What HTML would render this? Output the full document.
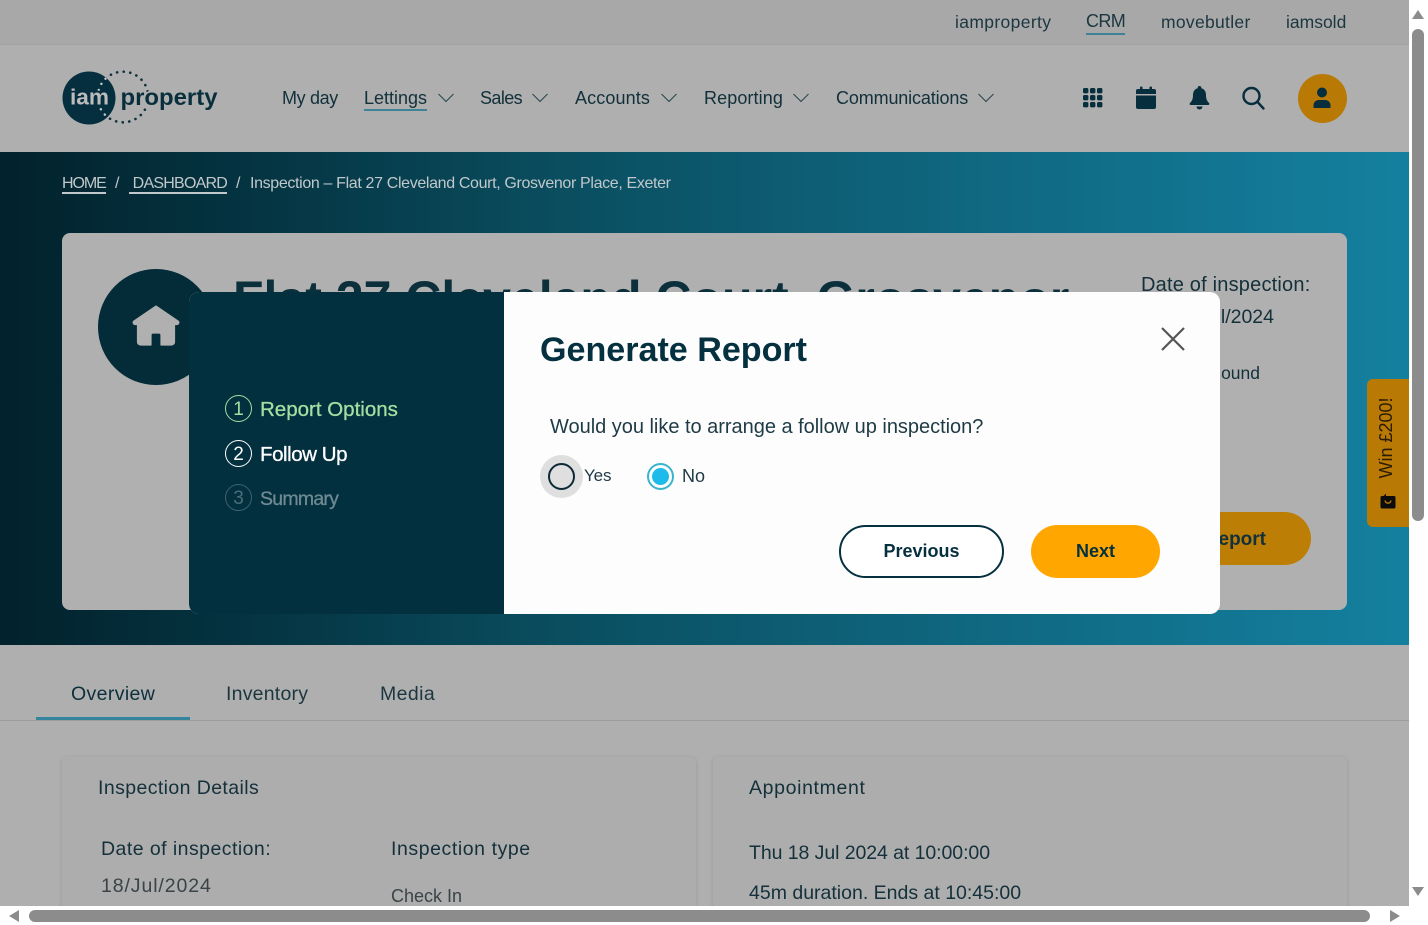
<!DOCTYPE html>
<html lang="en"><head><meta charset="utf-8"><title>Generate Report</title>
<style>
html,body{margin:0;padding:0;width:1428px;height:925px;overflow:hidden;background:#fff}
body{font-family:"Liberation Sans",sans-serif;color:#0b2a35;position:relative}
.t{position:absolute;white-space:nowrap;line-height:1.2}
.b{position:absolute}
#vp{position:absolute;left:0;top:0;width:1409px;height:906px;overflow:hidden;background:#afafaf}
.nav{font-size:18px;color:#12303a;top:88px}
.ul{position:absolute;height:2px;background:#3f8298}
svg{position:absolute;overflow:visible}
.card{position:absolute;background:#adadad;border-radius:6px;box-shadow:0 1px 5px rgba(0,0,0,.12)}
.step{position:absolute;left:225px;width:25px;height:25px;border:1.5px solid;border-radius:50%;text-align:center;line-height:27px;font-size:19px;box-sizing:content-box}
.m{-webkit-text-stroke:.3px currentColor}
.bc{font-size:16px;color:#c0c8cb;line-height:16px;top:176px}
</style></head><body>
<div id="vp">
 <div class="b" style="left:0;top:0;width:1409px;height:44px;background:#a8a8a8;border-bottom:1px solid #a2a2a2"></div>
 <div class="t" style="left:955px;top:12px;font-size:17.5px;letter-spacing:.36px;color:#1c3640">iamproperty</div>
 <div class="t" style="left:1086px;top:11px;font-size:18px;letter-spacing:-.6px;color:#1c3640">CRM</div>
 <div class="ul" style="left:1086px;top:33px;width:39px"></div>
 <div class="t" style="left:1161px;top:12px;font-size:17.5px;letter-spacing:.3px;color:#1c3640">movebutler</div>
 <div class="t" style="left:1286px;top:12px;font-size:17.5px;color:#1c3640">iamsold</div>

 <svg style="left:60px;top:68px" width="160" height="60" viewBox="0 0 160 60">
  <defs><clipPath id="cp"><circle cx="29" cy="30" r="26.5"/></clipPath></defs>
  <circle cx="63" cy="29" r="25.3" fill="none" stroke="#10303b" stroke-width="2.600" stroke-linecap="round" stroke-dasharray="0.1 6.55"/>
  <circle cx="29" cy="30" r="26.5" fill="#052f3e"/>
  <circle cx="63" cy="29" r="25.3" fill="none" stroke="#c4c9cb" stroke-width="2.400" stroke-linecap="round" stroke-dasharray="0.1 6.55" clip-path="url(#cp)"/>
  <text x="10" y="36.500" font-family="Liberation Sans" font-size="22" font-weight="700" fill="#bcbcbc" stroke="#052f3e" stroke-width="4" paint-order="stroke" textLength="39" lengthAdjust="spacingAndGlyphs">iam</text>
  <text x="60.500" y="37" font-family="Liberation Sans" font-size="23.500" font-weight="700" fill="#0a2f3c" stroke="#afafaf" stroke-width="3.500" paint-order="stroke" textLength="97" lengthAdjust="spacingAndGlyphs">property</text>
 </svg>
 <div class="t nav" style="left:282px;letter-spacing:-.35px">My day</div>
 <div class="t nav" style="left:364px">Lettings</div>
 <div class="ul" style="left:364px;top:109px;width:63px"></div>
 <div class="t nav" style="left:480px;letter-spacing:-.6px">Sales</div>
 <div class="t nav" style="left:575px;letter-spacing:.12px">Accounts</div>
 <div class="t nav" style="left:704px;letter-spacing:.1px">Reporting</div>
 <div class="t nav" style="left:836px;letter-spacing:-.14px">Communications</div>
 <svg style="left:0;top:0" width="1409" height="150" fill="none" stroke="#2a4651" stroke-width="1.100">
  <path d="M438.500 94l7.500 7.500 7.500-7.500M532.500 94l7.500 7.500 7.500-7.500M661.500 94l7.500 7.500 7.500-7.500M793.500 94l7.500 7.500 7.500-7.500M978.500 94l7.500 7.500 7.500-7.500"/>
 </svg>
 <svg style="left:1083px;top:88px" width="20" height="20" fill="#072e3c">
  <rect x="0" y="0" width="5.400" height="5.400" rx="1.600"/><rect x="7" y="0" width="5.400" height="5.400" rx="1.600"/><rect x="14" y="0" width="5.400" height="5.400" rx="1.600"/>
  <rect x="0" y="7" width="5.400" height="5.400" rx="1.600"/><rect x="7" y="7" width="5.400" height="5.400" rx="1.600"/><rect x="14" y="7" width="5.400" height="5.400" rx="1.600"/>
  <rect x="0" y="14" width="5.400" height="5.400" rx="1.600"/><rect x="7" y="14" width="5.400" height="5.400" rx="1.600"/><rect x="14" y="14" width="5.400" height="5.400" rx="1.600"/>
 </svg>
 <svg style="left:1136px;top:86px" width="20" height="24" fill="#072e3c">
  <path d="M2 3h16a2 2 0 0 1 2 2v3H0V5a2 2 0 0 1 2-2zM0 9.500h20V21a2 2 0 0 1-2 2H2a2 2 0 0 1-2-2z"/><rect x="4" y="0.500" width="2.500" height="5" rx="1"/><rect x="13.500" y="0.500" width="2.500" height="5" rx="1"/>
 </svg>
 <svg style="left:1189px;top:86px" width="21" height="24" fill="#072e3c">
  <path d="M10.500 0a1.800 1.800 0 0 1 1.800 2.200C15.500 3 17 5.700 17 9c0 4 1 6 3 8 .8.800.3 2-.8 2H1.800c-1.100 0-1.600-1.200-.8-2 2-2 3-4 3-8 0-3.300 1.500-6 4.700-6.800A1.800 1.800 0 0 1 10.500 0z"/><path d="M7.500 20.500h6a3 3 0 0 1-6 0z"/>
 </svg>
 <svg style="left:1242px;top:86px" width="23" height="24" fill="none" stroke="#072e3c" stroke-width="2.400">
  <circle cx="9.500" cy="10" r="8"/><path d="M15.500 16l6 6.500" stroke-linecap="round"/>
 </svg>
 <div class="b" style="left:1298px;top:74px;width:49px;height:49px;border-radius:50%;background:#b87a05"></div>
 <svg style="left:1312px;top:87px" width="20" height="22" fill="#072e3c">
  <circle cx="10" cy="5.500" r="5"/><path d="M1.500 21v-2.500C1.500 15 4 13 7 13h6c3 0 5.500 2 5.500 5.500V21z"/>
 </svg>

 <div class="b" style="left:0;top:152px;width:1409px;height:493px;background:linear-gradient(90deg,#02222c 0%,#053644 20%,#0a4e60 40%,#0e6077 60%,#11708b 80%,#14809f 100%)"></div>
 <div class="t bc" style="left:62px;letter-spacing:-1.05px;border-bottom:2px solid #c0c8cb">HOME</div>
 <div class="t bc" style="left:115px">/</div>
 <div class="t bc" style="left:129px;letter-spacing:-.77px;border-bottom:2px solid #c0c8cb">&nbsp;DASHBOARD</div>
 <div class="t bc" style="left:236px">/</div>
 <div class="t bc" style="left:250px;letter-spacing:-.35px">Inspection – Flat 27 Cleveland Court, Grosvenor Place, Exeter</div>

 <div class="b" style="left:62px;top:233px;width:1285px;height:377px;background:#b0b0b0;border-radius:8px"></div>
 <div class="b" style="left:98px;top:269px;width:116px;height:116px;border-radius:50%;background:#032b38"></div>
 <svg style="left:133px;top:304px" width="47" height="42" fill="#b0b0b0" stroke="#b0b0b0" stroke-width="1.200" stroke-linejoin="round">
  <path d="M23 2L45 17c1.500 1 .8 3.500-1 3.500H41.500V38a3 3 0 0 1-3 3H28V31a2 2 0 0 0-2-2H20a2 2 0 0 0-2 2V41H7.500a3 3 0 0 1-3-3V20.500H2c-1.800 0-2.500-2.500-1-3.500z"/>
 </svg>
 <div class="t" style="left:233px;top:272px;font-size:50px;font-weight:700;color:#0c2f3c;line-height:54px">Flat 27 Cleveland Court, Grosvenor</div>
 <div class="t" style="left:1141px;top:273px;font-size:20px;letter-spacing:.2px;color:#14303a">Date of inspection:</div>
 <div class="t" style="left:1150px;width:124px;text-align:right;top:306px;font-size:19.500px;color:#14303a">18/Jul/2024</div>
 <div class="t" style="left:1160px;width:100px;text-align:right;top:363px;font-size:17.500px;color:#14303a">ound</div>
 <div class="b" style="left:1140px;top:512px;width:171px;height:53px;border-radius:27px;background:#bd7e06"></div>
 <div class="t" style="left:1166px;width:100px;text-align:right;top:529px;font-size:19px;font-weight:700;color:#14303a">eport</div>

 <div class="b" style="left:1367px;top:379px;width:42px;height:148px;background:#b87a05;border-radius:6px 0 0 6px"></div>
 <div class="t" style="left:1387px;top:438px;font-size:18px;color:#2b1c03;transform:translate(-50%,-50%) rotate(-90deg)">Win £200!</div>
 <svg style="left:1379px;top:491px" width="18" height="18"><path d="M3 5h1.500L7 2.500V5h8a1.500 1.500 0 0 1 1.500 1.500V16a1.500 1.500 0 0 1-1.500 1.500H3A1.500 1.500 0 0 1 1.500 16V6.500A1.500 1.500 0 0 1 3 5z" fill="#0c0c0c"/><path d="M6 9.500c.8 3.500 5.200 3.500 6 0" stroke="#b87a05" fill="none" stroke-width="1.400"/></svg>

 <div class="b" style="left:0;top:645px;width:1409px;height:262px;background:#afafaf"></div>
 <div class="t" style="left:71px;top:683px;font-size:19.500px;letter-spacing:.37px;color:#0c2f3c">Overview</div>
 <div class="t" style="left:226px;top:683px;font-size:19.500px;letter-spacing:.22px;color:#1c3640">Inventory</div>
 <div class="t" style="left:380px;top:683px;font-size:19.500px;letter-spacing:.4px;color:#1c3640">Media</div>
 <div class="b" style="left:36px;top:717px;width:154px;height:3px;background:#35849e"></div>
 <div class="b" style="left:0;top:720px;width:1409px;height:1px;background:#9c9c9c"></div>
 <div class="card" style="left:62px;top:757px;width:634px;height:170px"></div>
 <div class="card" style="left:713px;top:757px;width:634px;height:170px"></div>
 <div class="t" style="left:98px;top:777px;font-size:19.500px;letter-spacing:.4px;color:#14303a">Inspection Details</div>
 <div class="t" style="left:749px;top:777px;font-size:19.500px;letter-spacing:.64px;color:#14303a">Appointment</div>
 <div class="t" style="left:101px;top:838px;font-size:19.500px;letter-spacing:.45px;color:#14303a">Date of inspection:</div>
 <div class="t" style="left:391px;top:838px;font-size:19.500px;letter-spacing:.57px;color:#14303a">Inspection type</div>
 <div class="t" style="left:101px;top:875px;font-size:19.500px;letter-spacing:.9px;color:#3a4447">18/Jul/2024</div>
 <div class="t" style="left:391px;top:886px;font-size:18px;color:#3a4447">Check In</div>
 <div class="t" style="left:749px;top:842px;font-size:19.500px;letter-spacing:-.07px;color:#14303a">Thu 18 Jul 2024 at 10:00:00</div>
 <div class="t" style="left:749px;top:882px;font-size:19.500px;color:#14303a">45m duration. Ends at 10:45:00</div>

 <!-- Modal -->
 <div class="b" style="left:189px;top:292px;width:1031px;height:322px;border-radius:10px;background:#fdfdfd;overflow:hidden">
  <div class="b" style="left:0;top:0;width:315px;height:322px;background:#03303f"></div>
 </div>
 <div class="step" style="top:395px;color:#a6dea1;border-color:#a6dea1">1</div>
 <div class="t m" style="left:260px;top:398px;font-size:20.500px;color:#a6dea1">Report Options</div>
 <div class="step" style="top:440px;color:#fff;border-color:#fff">2</div>
 <div class="t m" style="left:260px;top:443px;font-size:20.500px;letter-spacing:-.45px;color:#fff">Follow Up</div>
 <div class="step" style="top:484px;color:#4d6e79;border-color:#3f626d">3</div>
 <div class="t m" style="left:260px;top:488px;font-size:19.500px;letter-spacing:-.75px;color:#6f8a93">Summary</div>

 <div class="t" style="left:540px;top:329px;font-size:34.100px;font-weight:700;color:#05303f;line-height:42px">Generate Report</div>
 <svg style="left:1161px;top:327px" width="24" height="24" stroke="#555" stroke-width="2.200" fill="none"><path d="M1 1l22 22M23 1L1 23"/></svg>
 <div class="t" style="left:550px;top:415px;font-size:20px;letter-spacing:-.02px;color:#1e3a45">Would you like to arrange a follow up inspection?</div>
 <div class="b" style="left:540px;top:455px;width:43px;height:43px;border-radius:50%;background:#dfdfe0"></div>
 <div class="b" style="left:548px;top:463px;width:27px;height:27px;box-sizing:border-box;border:2px solid #0d2a36;border-radius:50%"></div>
 <div class="t" style="left:584px;top:466px;font-size:17px;letter-spacing:-.1px;color:#1e3a45">Yes</div>
 <div class="b" style="left:647px;top:463px;width:27px;height:27px;box-sizing:border-box;border:2px solid #3ab4cb;border-radius:50%"></div>
 <div class="b" style="left:652px;top:468px;width:17px;height:17px;border-radius:50%;background:#1dbbe9"></div>
 <div class="t" style="left:682px;top:466px;font-size:18px;color:#1e3a45">No</div>
 <div class="b" style="left:839px;top:525px;width:165px;height:53px;box-sizing:border-box;border:2px solid #05303f;border-radius:27px;background:#fff"></div>
 <div class="t" style="left:839px;top:541px;width:165px;text-align:center;font-size:18px;font-weight:700;color:#05303f">Previous</div>
 <div class="b" style="left:1031px;top:525px;width:129px;height:53px;border-radius:27px;background:#ffa600"></div>
 <div class="t" style="left:1031px;top:541px;width:129px;text-align:center;font-size:18px;font-weight:700;color:#05303f">Next</div>
</div>

<!-- scrollbars -->
<div class="b" style="left:1412px;top:29px;width:12px;height:492px;border-radius:6px;background:#8c8c8c"></div>
<svg style="left:1411px;top:10px" width="14" height="10" fill="#8c8c8c"><path d="M7 0l6 9H1z"/></svg>
<svg style="left:1411px;top:887px" width="14" height="10" fill="#8c8c8c"><path d="M7 9l6-9H1z"/></svg>
<div class="b" style="left:29px;top:910px;width:1341px;height:12px;border-radius:6px;background:#8c8c8c"></div>
<svg style="left:9px;top:909px" width="10" height="14" fill="#8c8c8c"><path d="M0 7l10-6v12z"/></svg>
<svg style="left:1390px;top:909px" width="10" height="14" fill="#8c8c8c"><path d="M10 7L0 1v12z"/></svg>
</body></html>
